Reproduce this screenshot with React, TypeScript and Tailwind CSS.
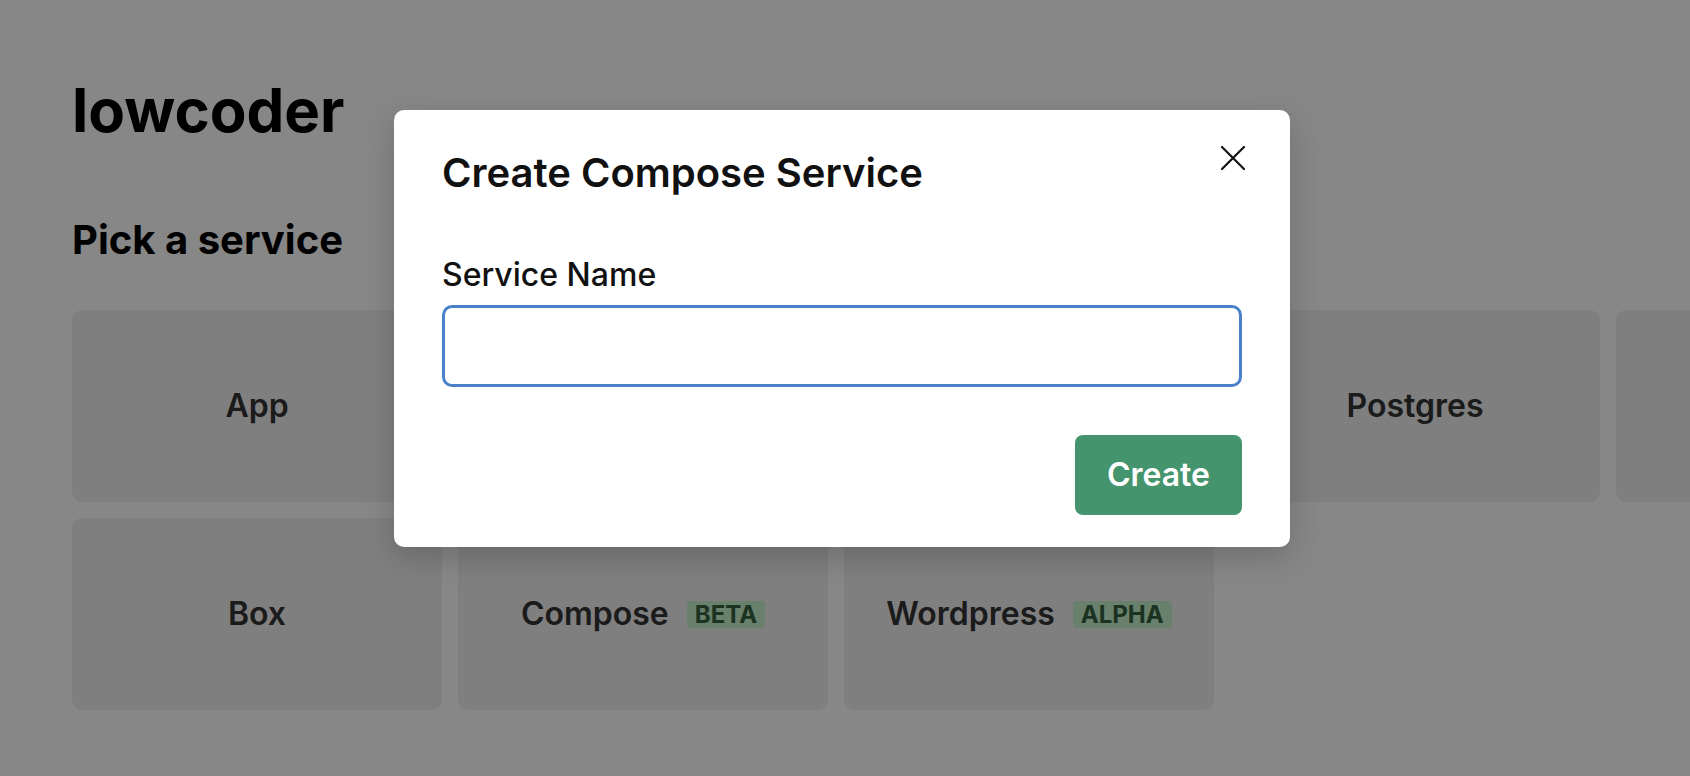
import { useState } from 'react';

type Service = { name: string; badge?: string };

// Row one runs past the right edge of the window; the last card there shows no label.
const SERVICES: Service[] = [
  { name: 'App' },
  { name: 'MySQL' },
  { name: 'MariaDB' },
  { name: 'Postgres' },
  { name: '' },
  { name: 'Box' },
  { name: 'Compose', badge: 'BETA' },
  { name: 'Wordpress', badge: 'ALPHA' },
];

function CloseIcon() {
  return (
    <svg width="26" height="26" viewBox="0 0 26 26" fill="none">
      <path d="M2 2L24 24M24 2L2 24" stroke="#111" strokeWidth="2.2" strokeLinecap="round" />
    </svg>
  );
}

function ServiceCard({ service }: { service: Service }) {
  return (
    <button className="h-[192px] rounded-[10px] bg-[#f0f0f0] flex items-center justify-center gap-[18px] text-[32px] font-semibold text-[#333]">
      {service.name && <span>{service.name}</span>}
      {service.badge && (
        <span className="rounded-[4px] bg-[#c4f1cc] px-2 py-[1px] text-[24px] font-bold leading-[25px] text-[#356040]">
          {service.badge}
        </span>
      )}
    </button>
  );
}

export default function App() {
  const [name, setName] = useState('');

  return (
    <div className="relative h-screen w-full overflow-hidden bg-white font-['Inter',sans-serif] text-black">
      <div className="pl-[72px] pt-[80px]">
        <h1 className="text-[60px] font-bold leading-none">lowcoder</h1>
        <h2 className="mt-[80px] text-[40px] font-bold leading-none">Pick a service</h2>
        <div className="mt-[50px] grid grid-cols-[repeat(5,370px)] gap-4">
          {SERVICES.map((s, i) => (
            <ServiceCard key={i} service={s} />
          ))}
        </div>
      </div>

      <div className="absolute inset-0 flex items-start justify-center bg-black/[0.47] pt-[110px] pr-[6px]">
        <div className="relative w-[896px] rounded-[10px] bg-white px-12 pt-[43px] pb-8 shadow-[0_10px_30px_rgba(0,0,0,0.18)]">
          <button className="absolute right-[44px] top-[35px]" aria-label="Close">
            <CloseIcon />
          </button>
          <h3 className="text-[40px] font-semibold leading-none text-[#111]">Create Compose Service</h3>
          <label className="mt-[66px] block">
            <span className="block text-[32px] font-medium leading-none text-[#111]">Service Name</span>
            <input
              className="mt-[14px] block h-[82px] w-full rounded-[10px] border-[3px] border-[#4a80c8] px-4 text-[30px] outline-none"
              value={name}
              onChange={(e) => setName(e.target.value)}
            />
          </label>
          <div className="mt-12 flex justify-end">
            <button className="h-[80px] rounded-[8px] bg-[#44946d] px-[32px] text-[32px] font-semibold text-white">
              Create
            </button>
          </div>
        </div>
      </div>
    </div>
  );
}
